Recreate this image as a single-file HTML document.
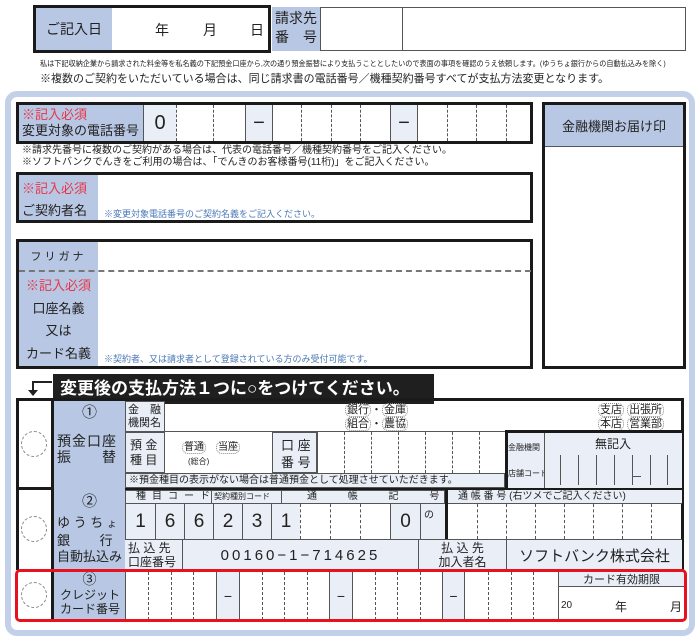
<!DOCTYPE html>
<html><head><meta charset="utf-8"><style>
*{box-sizing:border-box;margin:0;padding:0}
body{width:700px;height:640px;background:#fff;position:relative;overflow:hidden;font-family:"Liberation Sans","Noto Sans CJK JP",sans-serif;color:#222}
.a{position:absolute}
.bl{background:#b8c7e3}
.sh{background:#e9eef7}
.c{display:flex;align-items:center;justify-content:center;text-align:center}
.red{color:#e8354a}
.note{color:#4a78b8}
.row{display:flex;position:absolute}
.row>div{height:100%;border-left:1px dashed #555;display:flex;align-items:center;justify-content:center}
.row>div.s{border-left:1px solid #555}
.circ{position:absolute;width:26px;height:26px;border:1.5px dashed #888;border-radius:50%}
.pill{border:1px dotted #888;border-radius:6px;padding:0 1px}
</style></head><body>

<div class="a" style="left:33px;top:5px;width:238px;height:48px;border:3px solid #1a1a1a;background:#fff"></div>
<div class="a bl c" style="left:36px;top:8px;width:76px;height:42px;font-size:14px">ご記入日</div>
<div class="a" style="left:155px;top:20px;font-size:14px">年</div>
<div class="a" style="left:203px;top:20px;font-size:14px">月</div>
<div class="a" style="left:250px;top:20px;font-size:14px">日</div>
<div class="a bl" style="left:272px;top:7px;width:48px;height:44px;font-size:14px;line-height:19px;padding:2px 0 0 3px">請求先<br>番　号</div>
<div class="a" style="left:320px;top:7px;width:366px;height:44px;border:1px solid #555;border-left:1px solid #555"></div>
<div class="a" style="left:402px;top:7px;width:1px;height:44px;background:#555"></div>
<div class="a" style="left:40px;top:58px;font-size:7.5px;white-space:nowrap;transform:scaleX(0.95);transform-origin:left">私は下記収納企業から請求された料金等を私名義の下記預金口座から,次の通り預金振替により支払うこととしたいので表面の事項を確認のうえ依頼します。(ゆうちょ銀行からの自動払込みを除く)</div>
<div class="a" style="left:40px;top:70px;font-size:11px;white-space:nowrap">※複数のご契約をいただいている場合は、同じ請求書の電話番号／機種契約番号すべてが支払方法変更となります。</div>

<div class="a" style="left:5px;top:91px;width:690px;height:545px;border:6px solid #c3d0e9;border-radius:12px"></div>

<div class="a" style="left:16px;top:102px;width:517px;height:42px;border:3px solid #1a1a1a"></div>
<div class="a bl" style="left:19px;top:105px;width:124px;height:36px;font-size:13px;line-height:16px;padding:2px 0 0 3px"><span class="red">※記入必須</span><br>変更対象の電話番号</div>
<div class="row" style="left:143px;top:105px;height:36px;width:388px;font-size:20px">
<div class="s sh" style="width:33px">0</div><div style="width:37px"></div><div style="width:32px"></div><div class="s sh" style="width:27px">−</div><div class="s" style="width:29px"></div><div style="width:30px"></div><div style="width:29px"></div><div style="width:30px"></div><div class="s sh" style="width:27px">−</div><div class="s" style="width:30px"></div><div style="width:29px"></div><div style="width:30px"></div><div style="width:25px"></div>
</div>
<div class="a" style="left:22px;top:145px;font-size:10px;line-height:12px;white-space:nowrap">※請求先番号に複数のご契約がある場合は、代表の電話番号／機種契約番号をご記入ください。<br>※ソフトバンクでんきをご利用の場合は、「でんきのお客様番号(11桁)」をご記入ください。</div>

<div class="a" style="left:16px;top:172px;width:517px;height:51px;border:3px solid #1a1a1a"></div>
<div class="a bl" style="left:19px;top:175px;width:79px;height:45px;font-size:13px;line-height:22px;padding:3px 0 0 3px"><span class="red">※記入必須</span><br>ご契約者名</div>
<div class="a note" style="left:104px;top:207px;font-size:9px">※変更対象電話番号のご契約名義をご記入ください。</div>

<div class="a" style="left:16px;top:239px;width:517px;height:130px;border:3px solid #1a1a1a"></div>
<div class="a bl" style="left:19px;top:242px;width:79px;height:124px"></div>
<div class="a c" style="left:19px;top:248px;width:79px;font-size:11px;letter-spacing:3px">フリガナ</div>
<div class="a" style="left:19px;top:270px;width:512px;border-top:2px dashed #777"></div>
<div class="a c" style="left:19px;top:275px;width:79px;font-size:13px;line-height:22.5px;flex-direction:column"><span class="red">※記入必須</span><span>口座名義</span><span>又は</span><span>カード名義</span></div>
<div class="a note" style="left:104px;top:352px;font-size:9px">※契約者、又は請求者として登録されている方のみ受付可能です。</div>

<div class="a" style="left:542px;top:102px;width:144px;height:267px;border:3px solid #1a1a1a"></div>
<div class="a bl c" style="left:545px;top:105px;width:138px;height:42px;font-size:13px;border-bottom:1px solid #555">金融機関お届け印</div>

<div class="a" style="left:32px;top:381px;width:20px;height:2px;background:#222"></div>
<div class="a" style="left:32px;top:381px;width:2px;height:10px;background:#222"></div>
<div class="a" style="left:28px;top:390px;border-left:5px solid transparent;border-right:5px solid transparent;border-top:6px solid #222"></div>
<div class="a" style="left:53px;top:374px;width:381px;height:30px;background:#1f1f1f;color:#fff;font-size:17px;font-weight:bold;line-height:30px;padding-left:7px;white-space:nowrap">変更後の支払方法１つに○をつけてください。</div>

<div class="a" style="left:16px;top:398px;width:668px;height:172px;border:3px solid #1a1a1a;border-bottom:none"></div>
<div class="a" style="left:16px;top:487px;width:668px;height:3px;background:#1a1a1a"></div>
<div class="a" style="left:51px;top:398px;width:3px;height:222px;background:#1a1a1a"></div>
<div class="a bl" style="left:54px;top:401px;width:71px;height:218px"></div>
<div class="circ" style="left:21px;top:431px"></div>
<div class="circ" style="left:21px;top:516px"></div>
<div class="circ" style="left:21px;top:582px"></div>

<div class="a c" style="left:54px;top:401px;width:71px;font-size:15px">①</div>
<div class="a" style="left:57px;top:433px;font-size:14px;line-height:16px;width:66px;letter-spacing:1px;white-space:nowrap">預金口座<br>振　　替</div>
<div class="a sh" style="left:125px;top:401px;width:40px;height:31px;border:1px solid #555;font-size:11px;line-height:13px;padding:2px 0 0 2px;white-space:nowrap">金　融<br>機関名</div>
<div class="a" style="left:165px;top:401px;width:517px;height:31px;border-bottom:1px solid #555"></div>
<div class="a" style="left:345px;top:403px;font-size:11px;line-height:14px"><span class="pill">銀行</span>・<span class="pill">金庫</span><br><span class="pill">組合</span>・<span class="pill">農協</span></div>
<div class="a" style="left:598px;top:403px;font-size:11px;line-height:14px"><span class="pill">支店</span> <span class="pill">出張所</span><br><span class="pill">本店</span> <span class="pill">営業部</span></div>
<div class="a" style="left:505px;top:430px;width:179px;height:3px;background:#1a1a1a"></div>
<div class="a sh" style="left:125px;top:432px;width:40px;height:41px;border:1px solid #555;font-size:12px;line-height:15px;padding:5px 0 0 4px;white-space:nowrap">預 金<br>種 目</div>
<div class="a" style="left:182px;top:438px;font-size:10px"><span class="pill">普通</span>　<span class="pill">当座</span></div>
<div class="a" style="left:188px;top:456px;font-size:8px">(総合)</div>
<div class="a sh" style="left:272px;top:432px;width:45px;height:41px;border:1px solid #555;font-size:13px;line-height:17px;padding:4px 0 0 8px;white-space:nowrap">口 座<br>番 号</div>
<div class="row" style="left:317px;top:432px;height:41px;width:188px">
<div class="s" style="width:27px"></div><div style="width:27px"></div><div style="width:27px"></div><div style="width:27px"></div><div style="width:27px"></div><div style="width:27px"></div><div style="width:26px"></div>
</div>
<div class="a sh" style="left:125px;top:473px;width:380px;height:15px;border:1px solid #555;font-size:10px;line-height:13px;padding-left:3px;white-space:nowrap">※預金種目の表示がない場合は普通預金として処理させていただきます。</div>
<div class="a" style="left:505px;top:432px;width:3px;height:56px;background:#1a1a1a"></div>
<div class="a sh" style="left:508px;top:433px;width:36px;height:55px;font-size:8px;line-height:26px;padding-top:2px;white-space:nowrap">金融機関<br>店舗コード</div>
<div class="a sh" style="left:544px;top:433px;width:138px;height:55px;border-left:1px solid #555"></div>
<div class="a c" style="left:544px;top:435px;width:138px;font-size:12px">無記入</div>
<div class="row" style="left:560px;top:455px;height:30px;width:110px">
<div class="s" style="width:18px"></div><div class="s" style="width:18px"></div><div class="s" style="width:18px"></div><div class="s" style="width:18px"></div><div class="s" style="width:18px"></div><div class="s" style="width:18px;border-right:1px solid #555"></div>
</div>
<div class="a" style="left:632px;top:476px;width:9px;height:1px;background:#555"></div>

<div class="a c" style="left:54px;top:490px;width:71px;font-size:15px">②</div>
<div class="a" style="left:57px;top:515px;font-size:13px;line-height:16px;white-space:nowrap">ゆ う ち <span style="font-size:10px">ょ</span><br>銀　　 行<br>自動払込み</div>
<div class="a sh" style="left:125px;top:490px;width:320px;height:14px;border:1px solid #555;font-size:10px;line-height:12px;white-space:nowrap"><span class="a" style="left:10px;letter-spacing:6px">種目コード</span><span class="a" style="left:85px;font-size:8px;border-left:1px solid #555;padding-left:2px">契約種別コード</span><span class="a" style="left:155px;border-left:1px solid #555;padding-left:25px;word-spacing:28px">通 帳 記 号</span></div>
<div class="row" style="left:125px;top:504px;height:35px;width:295px;font-size:19px">
<div class="s sh" style="width:30px">1</div><div class="s sh" style="width:29px">6</div><div class="s sh" style="width:29px">6</div><div class="s sh" style="width:29px">2</div><div class="s sh" style="width:29px">3</div><div class="s sh" style="width:29px">1</div><div style="width:30px"></div><div style="width:30px"></div><div style="width:30px"></div><div class="s sh" style="width:30px">0</div>
</div>
<div class="a sh" style="left:420px;top:504px;width:25px;height:35px;border-left:1px solid #555;font-size:10px;padding:2px 0 0 3px">の</div>
<div class="a" style="left:445px;top:490px;width:3px;height:50px;background:#1a1a1a"></div>
<div class="a sh" style="left:448px;top:490px;width:234px;height:14px;border-bottom:1px solid #555;font-size:10px;line-height:13px;padding-left:10px;white-space:nowrap">通 帳 番 号 (右ツメでご記入ください)</div>
<div class="row" style="left:448px;top:504px;height:35px;width:234px">
<div style="width:29px;border-left:none"></div><div style="width:29px"></div><div style="width:29px"></div><div style="width:29px"></div><div style="width:29px"></div><div style="width:29px"></div><div style="width:29px"></div><div style="width:31px"></div>
</div>
<div class="a" style="left:125px;top:539px;width:557px;height:1px;background:#555"></div>
<div class="a sh" style="left:125px;top:540px;width:57px;height:30px;font-size:12px;line-height:14px;padding:1px 0 0 3px">払 込 先<br>口座番号</div>
<div class="a sh c" style="left:182px;top:540px;width:236px;height:30px;border-left:1px solid #555;font-size:15px;letter-spacing:3px">00160−1−714625</div>
<div class="a sh c" style="left:418px;top:540px;width:88px;height:30px;border-left:1px solid #555;font-size:12px;line-height:14px">払 込 先<br>加入者名</div>
<div class="a sh c" style="left:506px;top:540px;width:176px;height:30px;border-left:1px solid #555;font-size:15px">ソフトバンク株式会社</div>

<div class="a c" style="left:54px;top:571px;width:71px;font-size:14px;line-height:16px">③</div>
<div class="a" style="left:60px;top:588px;font-size:12px;line-height:14px;white-space:nowrap">クレジット<br>カード番号</div>
<div class="row" style="left:125px;top:572px;height:48px;width:433px;font-size:14px">
<div class="s" style="width:23px"></div><div style="width:23px"></div><div style="width:22px"></div><div style="width:23px"></div><div class="s sh" style="width:23px">−</div><div class="s" style="width:23px"></div><div style="width:22px"></div><div style="width:23px"></div><div style="width:22px"></div><div class="s sh" style="width:23px">−</div><div class="s" style="width:23px"></div><div style="width:22px"></div><div style="width:23px"></div><div style="width:22px"></div><div class="s sh" style="width:22px">−</div><div class="s" style="width:24px"></div><div style="width:23px"></div><div style="width:22px"></div><div style="width:23px"></div>
</div>
<div class="a sh c" style="left:558px;top:572px;width:126px;height:15px;border-left:1px solid #555;border-bottom:1px solid #555;font-size:11px">カード有効期限</div>
<div class="a" style="left:558px;top:587px;width:1px;height:33px;background:#555"></div>
<div class="a" style="left:561px;top:600px;font-size:10px">20</div>
<div class="a" style="left:615px;top:598px;font-size:12px">年</div>
<div class="a" style="left:670px;top:598px;font-size:12px">月</div>
<div class="a" style="left:15px;top:569px;width:672px;height:53px;border:3.5px solid #e8121e;border-radius:5px"></div>

</body></html>
